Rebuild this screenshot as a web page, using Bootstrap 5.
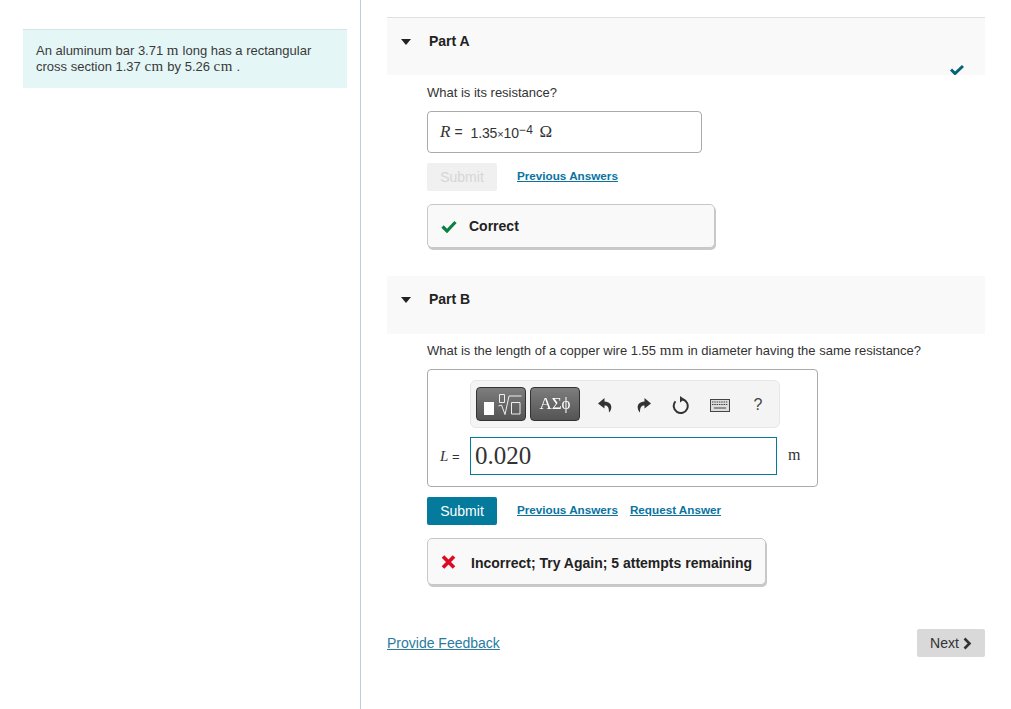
<!DOCTYPE html>
<html lang="en">
<head>
<meta charset="utf-8">
<title>Parts</title>
<link href="https://cdn.jsdelivr.net/npm/bootstrap@5.3.0/dist/css/bootstrap.min.css" rel="stylesheet">
<style>
html,body{height:709px;overflow:hidden}
body{font-family:"Liberation Sans",Arial,sans-serif;font-size:14px;color:#333;background:#fff}
.shell{height:709px}
.side{width:361px;border-right:1px solid #b9cfdd;padding:29px 13px 0 23px;flex:none}
.intro{background:#e5f6f7;border-top:1px solid #d5e3e6;padding:13px;line-height:16px;height:59px;color:#3a3a3a;font-size:13px}
.mth{font-family:"Liberation Serif",serif;font-size:15px;letter-spacing:.5px;line-height:1}
.mainc{width:598px;margin-left:26px;padding-top:17px;flex:none}
.parthead{background:#f9f9f9;height:58px;padding:14px 0 0 42px;font-weight:700;color:#222;line-height:18px;position:relative}
.parthead.top{border-top:1px solid #e0e0e0}
.caret{position:absolute;left:14px;top:21px;width:0;height:0;border-left:5.5px solid transparent;border-right:5.5px solid transparent;border-top:6px solid #222}
.okmark{position:absolute;right:21px;bottom:0}
.partbody{padding-left:40px}
.q{line-height:18px;font-size:13px}
.qa{margin-top:9px}
.ansbox{border:1px solid #aaa;border-radius:4px;width:275px;height:42px;padding:0 12px;margin-top:9px}
.ital{font-family:"Liberation Serif",serif;font-style:italic;font-size:17px}
.eqs{font-size:14px;margin:0 8px 0 4px}
.val{font-size:14px;margin-top:3px;letter-spacing:-.15px}
.val small{font-size:11px}
.val sup{font-size:12px;top:-.3em;letter-spacing:.5px}
.omg{font-family:"Liberation Serif",serif;font-size:17px;margin-left:6px}
.btnsub{width:70px;height:28px;font-size:14px;padding:0;border-radius:2px;border:0;line-height:28px}
.btnoff,.btnoff:disabled{background:#f0f0f0;color:#d6d6d6;opacity:1}
.btnon,.btnon:hover{background:#047a9c;color:#fff}
.acts{margin-top:10px;gap:20px}
.lnk{font-size:11.7px;font-weight:700;color:#0a73a0;text-decoration:underline;line-height:14px;margin-top:-3px;white-space:nowrap}
.lnks{gap:12px}
.fb{border:1px solid #c7c7c7;border-radius:5px;background:#f9f9f9;box-shadow:1px 2px 0 #c9c9c9;font-weight:700;color:#222;padding:0 5px 0 13px;white-space:nowrap}
.fb1{width:288px;height:44px;margin-top:13px}
.fb2{width:339px;height:47px;margin-top:13px}
.fb2 span{padding-top:3px;margin-left:-1px}
.gapb{height:28px}
.qb{margin-top:8px}
.edit{border:1px solid #aaa;border-radius:4px;width:391px;height:118px;margin-top:9px;padding:10px 12px 0 12px}
.tools{width:310px;height:48px;margin-left:30px;background:#f4f4f4;border:1px solid #e6e6e6;border-radius:6px;padding:5px}
.tb{width:50px;height:34px;flex:none;border-radius:4px;border:1px solid #333;background:linear-gradient(#7d7d7d,#545454);color:#fff;font-family:"Liberation Serif",serif;font-size:17px;margin-right:4px;padding:0;will-change:transform}
.ico{width:38.2px;height:36px;flex:none;padding-top:2px}
.ico1{margin-left:2px}
.help{font-size:16px;color:#444}
.inrow{margin-top:9px}
.lab{width:30px;white-space:nowrap;font-size:13px;flex:none}
.lab .ital{font-size:15px}
.mathin{width:307px;height:38px;border:1px solid #047a9c;font-family:"Liberation Serif",serif;font-size:25px;color:#333;padding:0 4px;line-height:36px;flex:none}
.unit{font-family:"Liberation Serif",serif;font-size:16px;letter-spacing:.4px;margin-left:11px;margin-top:-2px}
.foot{margin-top:44px}
.fblink{color:#2a7ba0;text-decoration:underline;line-height:18px}
.nextb,.nextb:hover{width:68px;height:28px;background:#d9d9d9;color:#333;border:0;border-radius:2px;padding:0;font-size:14px}
</style>
</head>
<body>
<div class="d-flex shell">
  <aside class="side">
    <div class="intro"><div>An aluminum bar 3.71 <span class="mth">m</span> long has a rectangular</div><div>cross section 1.37 <span class="mth">cm</span> by 5.26 <span class="mth">cm</span> .</div></div>
  </aside>
  <main class="mainc">
    <div class="parthead top"><span class="caret"></span>Part A
      <svg class="okmark" width="14" height="11" viewBox="0 0 14 11"><path d="M1 5.500 5 9.500 13 2" fill="none" stroke="#04627a" stroke-width="3"/></svg>
    </div>
    <div class="partbody">
      <div class="q qa">What is its resistance?</div>
      <div class="ansbox d-flex align-items-center">
        <span class="ital">R</span><span class="eqs">=</span>
        <span class="val">1.35<small>×</small>10<sup>−4</sup></span>
        <span class="omg">Ω</span>
      </div>
      <div class="d-flex acts align-items-center">
        <button class="btn btnsub btnoff" disabled>Submit</button>
        <a href="#" class="lnk">Previous Answers</a>
      </div>
      <div class="fb fb1 d-flex align-items-center">
        <svg class="me-2" width="16" height="13" viewBox="0 0 16 13"><path d="M1.500 6.500 6 11 14.500 2" fill="none" stroke="#0b8043" stroke-width="3.200"/></svg>
        <span class="ms-1">Correct</span>
      </div>
    </div>
    <div class="gapb"></div>
    <div class="parthead"><span class="caret"></span>Part B</div>
    <div class="partbody">
      <div class="q qb">What is the length of a copper wire 1.55 <span class="mth">mm</span> in diameter having the same resistance?</div>
      <div class="edit">
        <div class="tools d-flex align-items-center">
          <button class="tb d-flex align-items-center justify-content-center" aria-label="templates">
            <svg width="48" height="32" viewBox="1 1 48 32"><rect x="8" y="15" width="10" height="13" fill="#fff"/><path d="M23.500 7.500h5v8h-5zM22.500 19l3-1 3.500 9.500 4-18.500h12.500M35.500 15.500h8.500v11.500h-8.500z" fill="none" stroke="#eee" stroke-width="1"/></svg>
          </button>
          <button class="tb">ΑΣϕ</button>
          <span class="ico ico1 d-flex align-items-center justify-content-center"><svg width="15" height="15" viewBox="0 0 15 15"><path d="M6.500 0 0 5.500 6.500 10.500V7.500c3 0 4.500 1.500 4.500 7 3-3 4.500-10-4.500-11z" fill="#333"/></svg></span>
          <span class="ico d-flex align-items-center justify-content-center"><svg width="15" height="15" viewBox="0 0 15 15"><path d="M8.500 0 15 5.500 8.500 10.500V7.500c-3 0-4.500 1.500-4.500 7-3-3-4.500-10 4.500-11z" fill="#333"/></svg></span>
          <span class="ico d-flex align-items-center justify-content-center"><svg width="18" height="18" viewBox="0 0 18 18"><path d="M10.500 3.200A7 7 0 1 1 3.500 5.300" fill="none" stroke="#333" stroke-width="2"/><path d="M8 0v6.500l4.500-3.200z" fill="#333"/></svg></span>
          <span class="ico d-flex align-items-center justify-content-center"><svg width="20" height="13" viewBox="0 0 20 13"><rect x=".5" y=".5" width="19" height="12" fill="#ddd" stroke="#444"/><path d="M2 3h16M2 5.500h16" stroke="#444" stroke-dasharray="1.500 .8"/><path d="M4 9h12" stroke="#444"/></svg></span>
          <span class="ico help d-flex align-items-center justify-content-center">?</span>
        </div>
        <div class="inrow d-flex align-items-center">
          <span class="lab"><span class="ital">L</span> =</span>
          <div class="mathin">0.020</div>
          <span class="unit">m</span>
        </div>
      </div>
      <div class="d-flex acts align-items-center">
        <button class="btn btnsub btnon">Submit</button>
        <div class="d-flex lnks"><a href="#" class="lnk">Previous Answers</a><a href="#" class="lnk">Request Answer</a></div>
      </div>
      <div class="fb fb2 d-flex align-items-center">
        <svg class="me-3" width="15" height="14" viewBox="0 0 15 14"><path d="M2 1.500 13 12.500M13 1.500 2 12.500" fill="none" stroke="#dc0a22" stroke-width="3.600"/></svg>
        <span>Incorrect; Try Again; 5 attempts remaining</span>
      </div>
    </div>
    <div class="foot d-flex justify-content-between align-items-center">
      <a href="#" class="fblink">Provide Feedback</a>
      <button class="btn nextb d-flex align-items-center justify-content-center">Next
        <svg class="ms-1" width="9" height="13" viewBox="0 0 9 13"><path d="M1.500 1.500 6.500 6.500 1.500 11.500" fill="none" stroke="#333" stroke-width="2.600"/></svg>
      </button>
    </div>
  </main>
</div>
<script src="https://cdn.jsdelivr.net/npm/bootstrap@5.3.0/dist/js/bootstrap.bundle.min.js"></script>
</body>
</html>
